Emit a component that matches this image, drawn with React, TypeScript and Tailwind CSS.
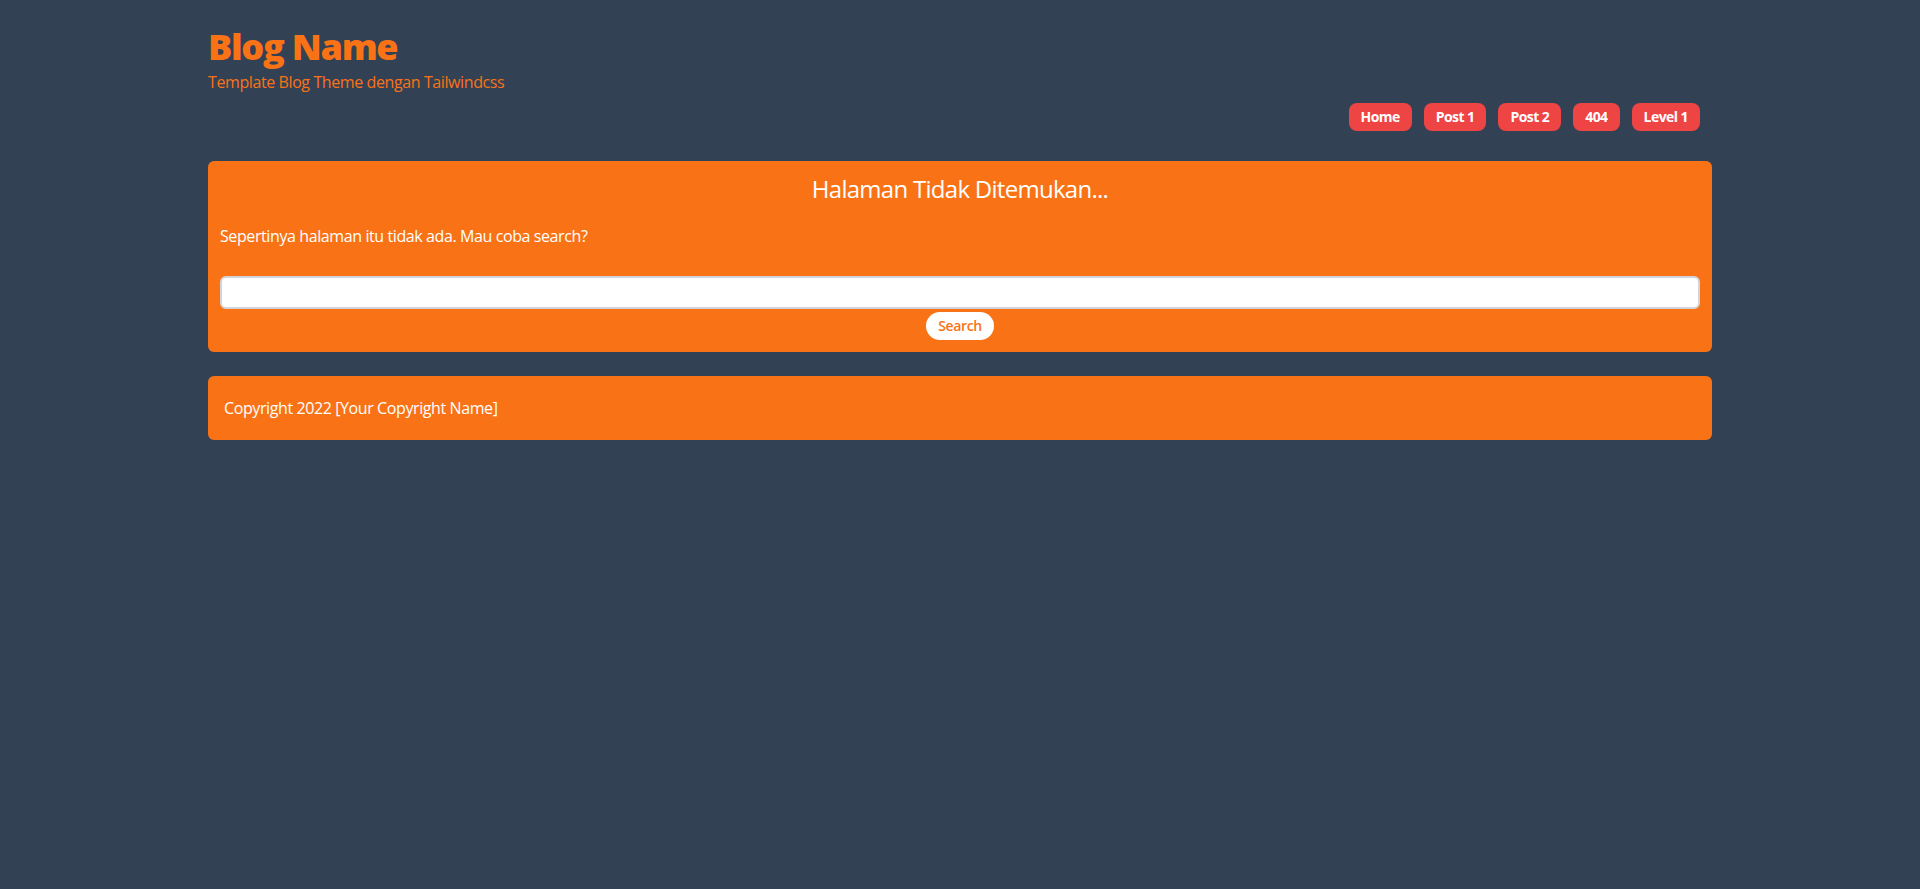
const navItems = ['Home', 'Post 1', 'Post 2', '404', 'Level 1'];

const NavButton = ({ title }: { title: string }) => {
  return (
    <a
      href="#"
      className="mx-1.5 rounded-lg bg-[#ef4444] px-3 py-1 text-sm leading-5 font-bold tracking-[-0.04em] text-white"
    >
      {title}
    </a>
  );
};

const App = () => {
  return (
    <div
      className="min-h-[889px] bg-[#334155] tracking-[-0.025em]"
      style={{ fontFamily: '"Open Sans", "Noto Sans", sans-serif' }}
    >
      <div className="container mx-auto px-4 pt-[22px]">
        <header>
          <h1 className="text-4xl leading-[49px] font-extrabold tracking-[-0.035em] text-[#f97316]">
            Blog Name
          </h1>
          <p className="text-base leading-[22px] text-[#f97316]">
            Template Blog Theme dengan Tailwindcss
          </p>
          <nav className="mt-[10px] flex justify-end">
            {navItems.map((item) => (
              <NavButton key={item} title={item} />
            ))}
            <div className="w-1.5" />
          </nav>
        </header>

        <main className="mt-[30px] rounded-md bg-[#f97316] p-3 text-white">
          <h2 className="text-center text-2xl leading-8 tracking-[-0.03em]">
            Halaman Tidak Ditemukan...
          </h2>
          <p className="mt-[19px] text-base leading-6">
            Sepertinya halaman itu tidak ada. Mau coba search?
          </p>
          <form className="mt-7 flex flex-col items-center">
            <input
              type="text"
              className="h-[33px] w-full rounded-md border-2 border-[#d1d5db] bg-white px-2 text-gray-900"
            />
            <button
              type="button"
              className="mt-[3px] rounded-full bg-white px-3 py-1 text-sm leading-5 font-semibold text-[#f97316]"
            >
              Search
            </button>
          </form>
        </main>

        <footer className="mt-6 rounded-md bg-[#f97316] px-4 py-5 text-base leading-6 text-white">
          Copyright 2022 [Your Copyright Name]
        </footer>
      </div>
    </div>
  );
};

export default App;
